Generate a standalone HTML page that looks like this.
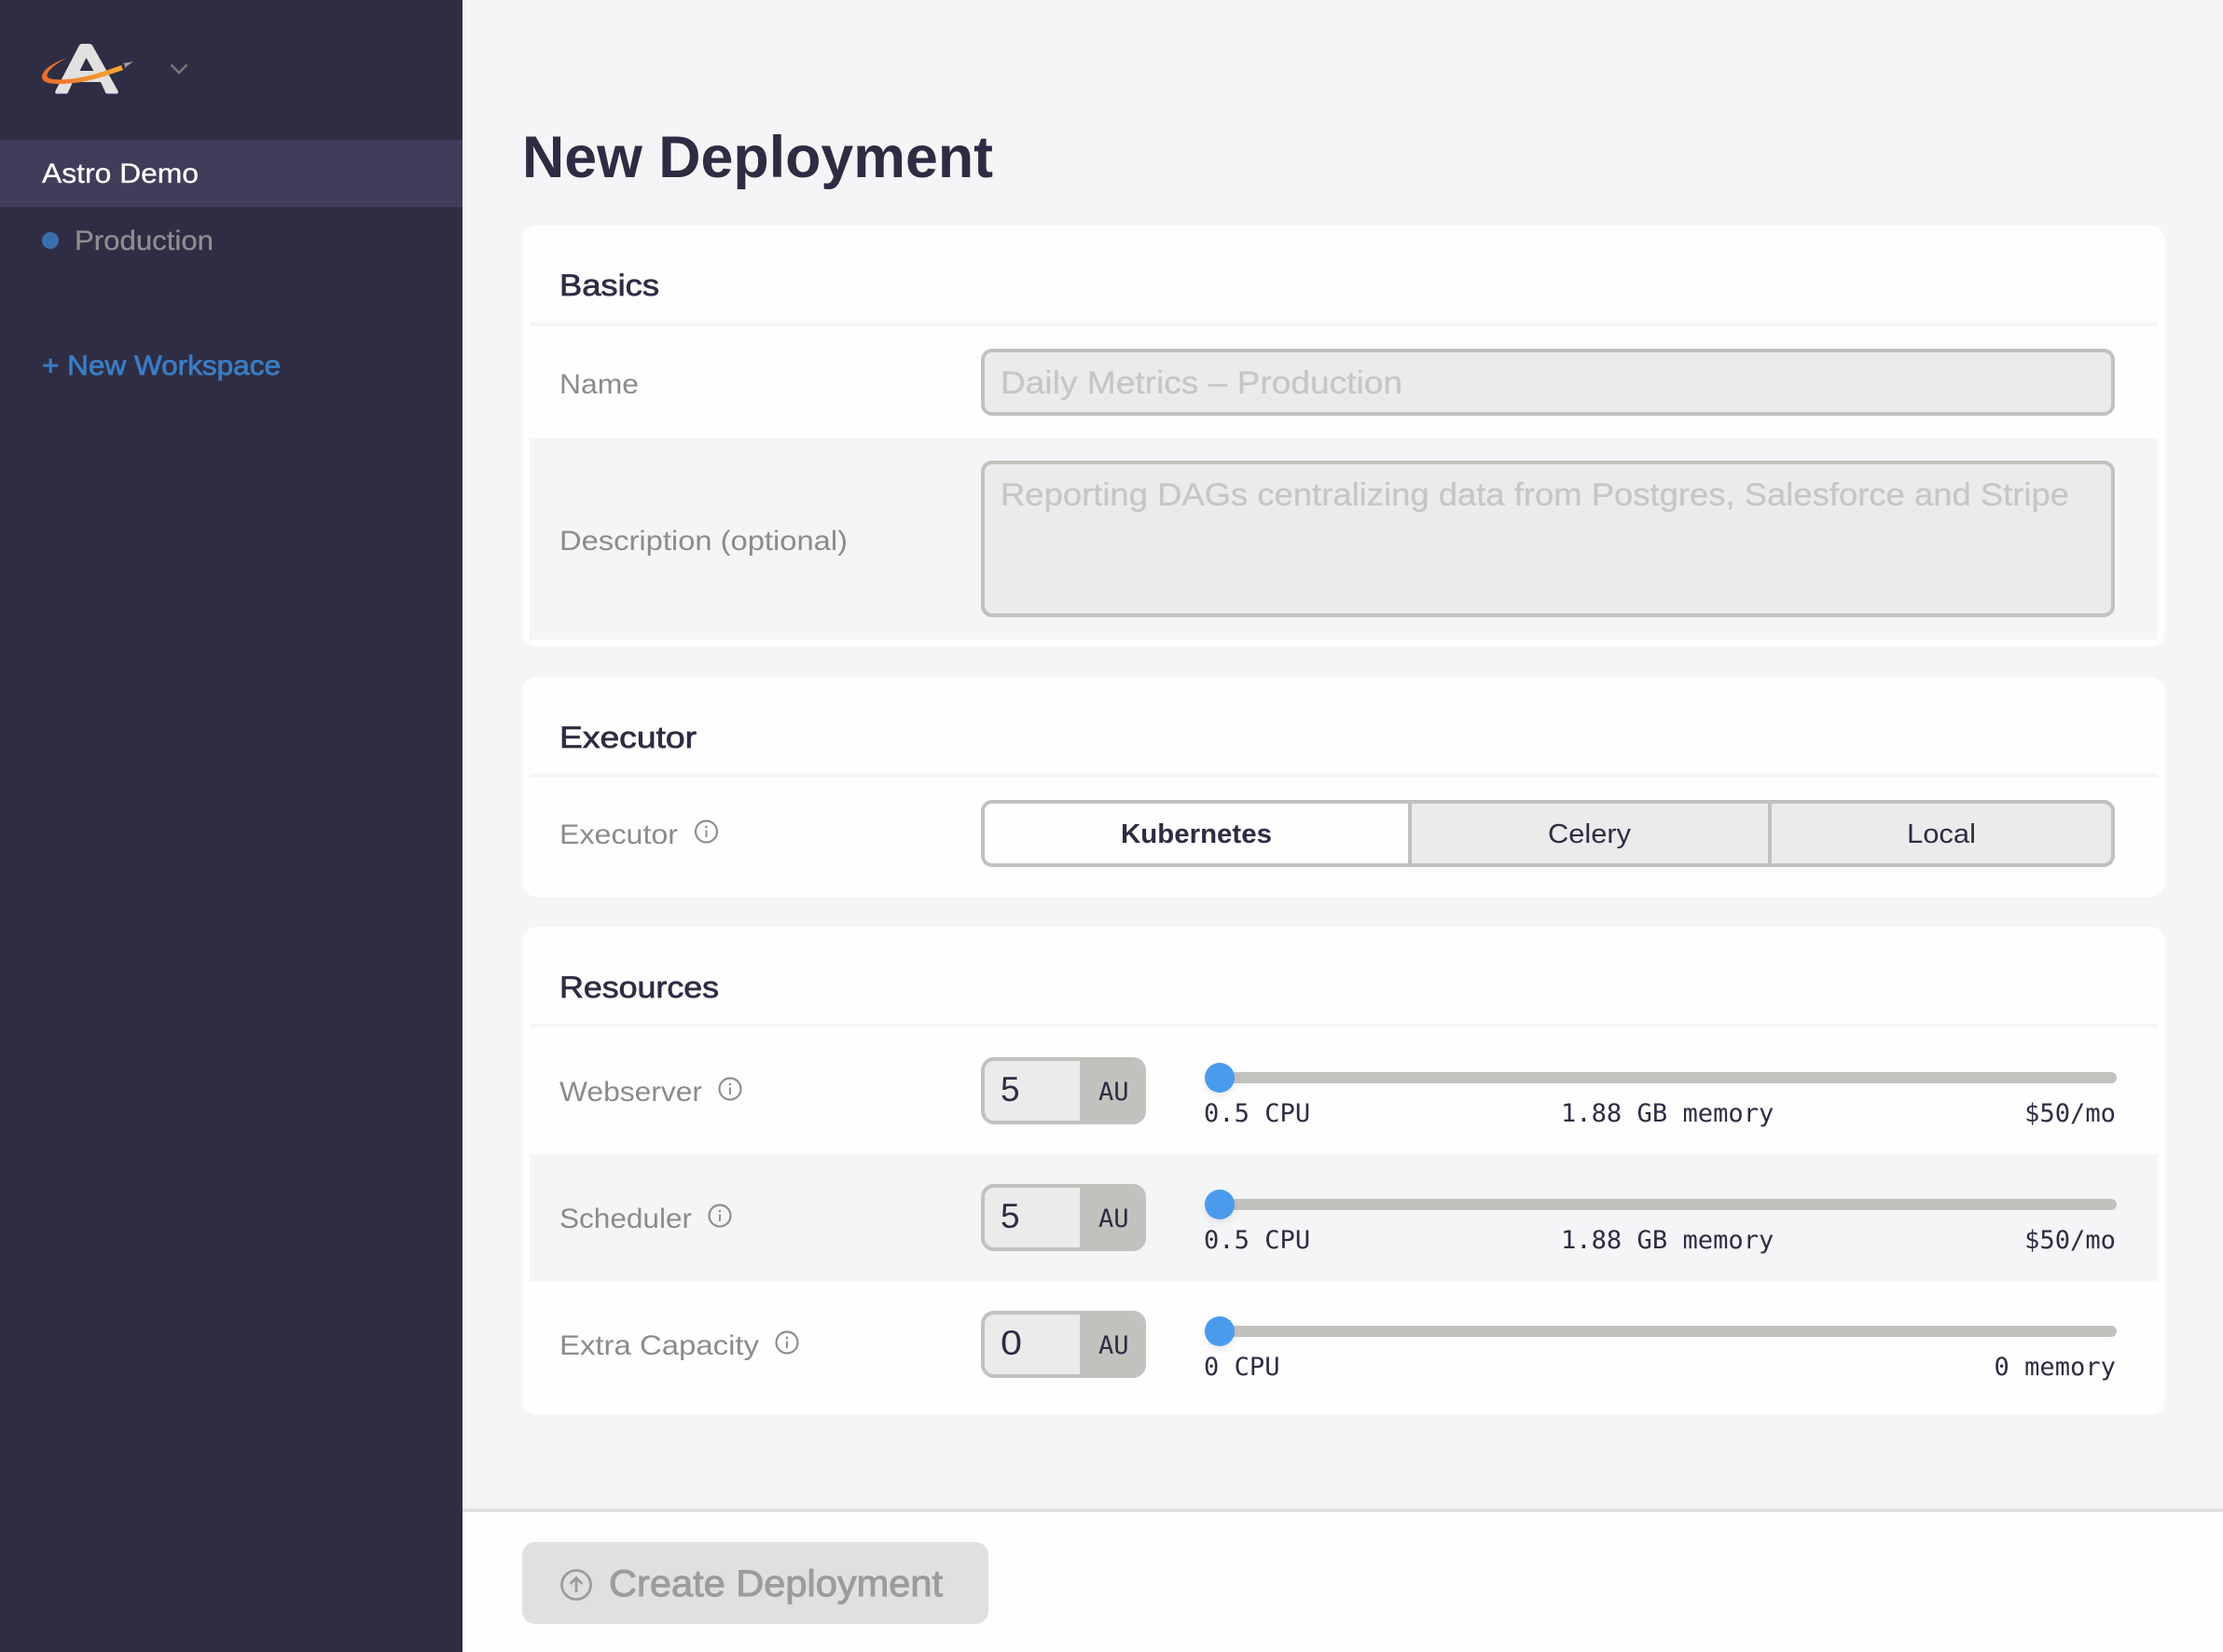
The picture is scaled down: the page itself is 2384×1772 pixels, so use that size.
<!DOCTYPE html>
<html lang="en">
<head>
<meta charset="utf-8">
<title>New Deployment</title>
<style>
html,body{margin:0;padding:0;width:2384px;height:1772px;overflow:hidden;background:#f4f5f6}
.b{position:absolute;box-sizing:border-box}
.card{background:#fefefe;border-radius:16px;left:560px;width:1762px}
.div{background:#f4f5f6;left:568px;width:1746px;height:4px}
.strip{background:#f4f5f6;left:568px;width:1746px}
.inp{background:#ebebeb;border:4px solid #c2c1be;border-radius:12px;left:1052px;width:1216px}
.num{left:1052px;width:177px;height:72px;background:#ebebeb;border:4px solid #c2c1be;border-radius:14px;overflow:hidden}
.num i{position:absolute;left:102px;top:-4px;width:75px;height:72px;background:#c2c1be}
.track{left:1292px;width:978px;height:12px;border-radius:6px;background:#c2c1be}
.thumb{left:1292px;width:32px;height:32px;border-radius:50%;background:#4a9bec;box-shadow:0 4px 8px rgba(0,0,0,.08)}
svg{position:absolute;left:0;top:0}
text{fill:currentColor;font-family:"Liberation Sans",sans-serif}
.lab{color:#8b8b89;font-size:30px}
.h{color:#2e2c42;font-size:32px;stroke:currentColor;stroke-width:.7px}
.ph{color:#c6c6c4;font-size:34px;stroke:currentColor;stroke-width:.3px}
.seg{color:#2e2c42;font-size:29px}
.mono{color:#2e2c42;font-family:"DejaVu Sans Mono",monospace;font-size:27.1px}
.val{color:#2e2c42;font-size:37px}
</style>
</head>
<body>
<div class="b" style="left:0;top:0;width:496px;height:1772px;background:#2f2d43"></div>
<div class="b" style="left:0;top:150px;width:496px;height:72px;background:#403d5a"></div>
<div class="b" style="left:45px;top:249px;width:18px;height:18px;border-radius:50%;background:#3a6fae"></div>

<div class="b card" style="top:242px;height:452px"></div>
<div class="b div" style="top:346px"></div>
<div class="b inp" style="top:374px;height:72px"></div>
<div class="b strip" style="top:470px;height:216px"></div>
<div class="b inp" style="top:494px;height:168px"></div>

<div class="b card" style="top:726px;height:236px"></div>
<div class="b div" style="top:830px"></div>
<div class="b" style="left:1052px;top:858px;width:1216px;height:72px;background:#ebebeb;border:4px solid #c2c1be;border-radius:12px;overflow:hidden">
  <div class="b" style="left:0;top:0;width:458px;height:64px;background:#fefefe"></div>
  <div class="b" style="left:454px;top:0;width:4px;height:64px;background:#c2c1be"></div>
  <div class="b" style="left:840px;top:0;width:4px;height:64px;background:#c2c1be"></div>
</div>

<div class="b card" style="top:994px;height:524px"></div>
<div class="b div" style="top:1098px"></div>
<div class="b strip" style="top:1238px;height:136px"></div>

<div class="b num" style="top:1134px"><i></i></div>
<div class="b num" style="top:1270px"><i></i></div>
<div class="b num" style="top:1406px"><i></i></div>
<div class="b track" style="top:1150px"></div>
<div class="b track" style="top:1286px"></div>
<div class="b track" style="top:1422px"></div>
<div class="b thumb" style="top:1140px"></div>
<div class="b thumb" style="top:1276px"></div>
<div class="b thumb" style="top:1412px"></div>

<div class="b" style="left:496px;top:1618px;width:1888px;height:154px;background:#fefefe;border-top:4px solid #e0e0df"></div>
<div class="b" style="left:560px;top:1654px;width:500px;height:88px;background:#e0e0df;border-radius:14px"></div>

<svg width="2384" height="1772" viewBox="0 0 2384 1772">
  <defs>
    <linearGradient id="sw" gradientUnits="userSpaceOnUse" x1="45" y1="80" x2="132" y2="75">
      <stop offset="0" stop-color="#e96c2c"/><stop offset="1" stop-color="#f7a833"/>
    </linearGradient>
    <g id="info" fill="none" stroke="#8f8f8d">
      <circle cx="0" cy="0" r="11.5" stroke-width="2.2"/>
      <path d="M0 -1.5V6" stroke-width="2"/>
      <circle cx="0" cy="-5" r="1.3" fill="#8f8f8d" stroke="none"/>
    </g>
  </defs>

  <!-- logo -->
  <path fill="#e2e1df" fill-rule="evenodd" d="M84.500 49.500Q85.500 47 88.500 47H95.500Q98.500 47 99.500 49.500L126.500 97.500Q127.500 100.500 125 100.500H115.500Q113.500 100.500 113 99L108 88H78L73 99Q72.500 100.500 70.500 100.500H61Q58.500 100.500 59.500 97.500ZM92.500 62L85.500 76H100.500Z"/>
  <path fill="url(#sw)" d="M72 62C58 67 44.500 75 45 83C45.500 90.500 60 90.500 75 89.500C95 88 115 81 132 75L130 70C112 76.500 92 83.500 72 85C60 85.800 51.500 85.500 50.500 81.500C50 76 60 68 72 62Z"/>
  <path fill="#a39e92" d="M132 68L143 66L133.500 73L134 70Z"/>
  <path fill="none" stroke="#77767a" stroke-width="2.400" d="M183.500 69.500L192 78L200.500 69.500"/>

  <!-- sidebar text -->
  <text x="45" y="196" font-size="30" textLength="168" lengthAdjust="spacingAndGlyphs" style="color:#fff;stroke:currentColor;stroke-width:.3px">Astro Demo</text>
  <text x="80" y="268" font-size="30" textLength="149" lengthAdjust="spacingAndGlyphs" style="color:#8e8e8e;stroke:currentColor;stroke-width:.3px">Production</text>
  <text x="45" y="402" font-size="30" textLength="256" lengthAdjust="spacingAndGlyphs" style="color:#3a7cc4;stroke:currentColor;stroke-width:.8px">+ New Workspace</text>

  <!-- title -->
  <text x="560" y="190" font-size="63" font-weight="700" textLength="505" lengthAdjust="spacingAndGlyphs" style="color:#2e2c42">New Deployment</text>

  <!-- headings -->
  <text class="h" x="600" y="317" textLength="107" lengthAdjust="spacingAndGlyphs">Basics</text>
  <text class="h" x="600" y="802" textLength="147" lengthAdjust="spacingAndGlyphs">Executor</text>
  <text class="h" x="600" y="1070" textLength="171" lengthAdjust="spacingAndGlyphs">Resources</text>

  <!-- labels -->
  <text class="lab" x="600" y="422" textLength="85" lengthAdjust="spacingAndGlyphs">Name</text>
  <text class="lab" x="600" y="590" textLength="309" lengthAdjust="spacingAndGlyphs">Description (optional)</text>
  <text class="lab" x="600" y="905" textLength="127" lengthAdjust="spacingAndGlyphs">Executor</text>
  <text class="lab" x="600" y="1181" textLength="153" lengthAdjust="spacingAndGlyphs">Webserver</text>
  <text class="lab" x="600" y="1317" textLength="142" lengthAdjust="spacingAndGlyphs">Scheduler</text>
  <text class="lab" x="600" y="1453" textLength="214" lengthAdjust="spacingAndGlyphs">Extra Capacity</text>

  <use href="#info" x="757.500" y="892"/>
  <use href="#info" x="783" y="1168"/>
  <use href="#info" x="772" y="1304"/>
  <use href="#info" x="844" y="1440"/>

  <!-- placeholders -->
  <text class="ph" x="1073" y="422" textLength="431" lengthAdjust="spacingAndGlyphs">Daily Metrics – Production</text>
  <text class="ph" x="1073" y="542" textLength="1146" lengthAdjust="spacingAndGlyphs">Reporting DAGs centralizing data from Postgres, Salesforce and Stripe</text>

  <!-- segmented -->
  <text class="seg" x="1202" y="904" font-weight="700" textLength="162" lengthAdjust="spacingAndGlyphs">Kubernetes</text>
  <text class="seg" x="1660" y="904" textLength="89" lengthAdjust="spacingAndGlyphs">Celery</text>
  <text class="seg" x="2045" y="904" textLength="74" lengthAdjust="spacingAndGlyphs">Local</text>

  <!-- number inputs -->
  <text class="val" x="1073" y="1181">5</text>
  <text class="val" x="1073" y="1317">5</text>
  <text class="val" x="1073" y="1453" textLength="23" lengthAdjust="spacingAndGlyphs">0</text>
  <text class="mono" x="1178" y="1180">AU</text>
  <text class="mono" x="1178" y="1316">AU</text>
  <text class="mono" x="1178" y="1452">AU</text>

  <!-- slider readouts -->
  <text class="mono" x="1291" y="1203">0.5 CPU</text>
  <text class="mono" x="1674" y="1203">1.88 GB memory</text>
  <text class="mono" x="2269" y="1203" text-anchor="end">$50/mo</text>
  <text class="mono" x="1291" y="1339">0.5 CPU</text>
  <text class="mono" x="1674" y="1339">1.88 GB memory</text>
  <text class="mono" x="2269" y="1339" text-anchor="end">$50/mo</text>
  <text class="mono" x="1291" y="1475">0 CPU</text>
  <text class="mono" x="2269" y="1475" text-anchor="end">0 memory</text>

  <!-- button -->
  <g fill="none" stroke="#9c9c9a">
    <circle cx="618" cy="1700" r="15.500" stroke-width="2.800"/>
    <path d="M618 1708V1693M611.500 1699L618 1692.500L624.500 1699" stroke-width="2.800"/>
  </g>
  <text x="653" y="1712" font-size="40" textLength="358" lengthAdjust="spacingAndGlyphs" style="color:#9c9c9a;stroke:currentColor;stroke-width:1px">Create Deployment</text>
</svg>
</body>
</html>
